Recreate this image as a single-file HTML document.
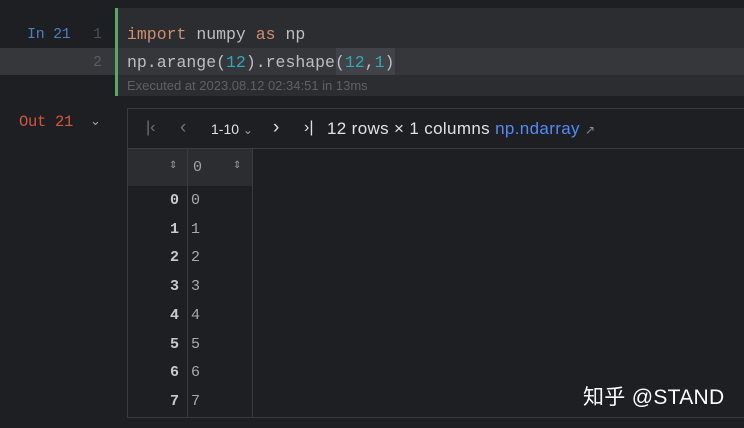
<!DOCTYPE html>
<html><head><meta charset="utf-8"><style>
body{margin:0;width:744px;height:428px;background:#1e1f22;overflow:hidden;position:relative;font-family:"Liberation Sans",sans-serif}
.a{position:absolute;white-space:nowrap}
.mono{font-family:"Liberation Mono","DejaVu Sans Mono",monospace;font-size:16.5px}
</style></head><body>
<div class="a" style="left:115px;top:8px;width:629px;height:88px;background:#2b2d30"></div>
<div class="a" style="left:0;top:48px;width:744px;height:27px;background:#35373b"></div>
<div class="a" style="left:336px;top:48px;width:59px;height:27px;background:#414349"></div>
<div class="a" style="left:115px;top:8px;width:3px;height:88px;background:#59a869"></div>
<div class="a mono" style="left:27px;top:26px;color:#4a7fc0;font-size:15px;letter-spacing:-0.3px">In 21</div>
<div class="a mono" style="left:93px;top:26px;color:#4b4d52;font-size:15px">1</div>
<div class="a mono" style="left:93px;top:54px;color:#5a5c61;font-size:15px">2</div>
<div class="a mono" style="left:127px;top:25px;color:#bcbec4"><span style="color:#cf8e6d">import</span> numpy <span style="color:#cf8e6d">as</span> np</div>
<div class="a mono" style="left:127px;top:53px;color:#bcbec4">np.arange(<span style="color:#2aacb8">12</span>).reshape(<span style="color:#2aacb8">12</span>,<span style="color:#2aacb8">1</span>)</div>
<div class="a" style="left:127px;top:78px;font-size:13px;color:#5f6166">Executed at 2023.08.12 02:34:51 in 13ms</div>
<div class="a mono" style="left:19px;top:113px;color:#d0583c;font-size:15.5px;letter-spacing:-0.3px">Out 21</div>
<div class="a" style="left:90px;top:113px;color:#a0a2a8;font-size:13px">&#8964;</div>
<div class="a" style="left:127px;top:108px;width:617px;height:310px;border:1px solid #393b40;border-right:none;box-sizing:border-box"></div>
<div class="a" style="left:128px;top:148px;width:616px;height:1px;background:#393b40"></div>
<div class="a" style="left:146px;top:119px;font-size:16px;color:#6f7177">|&lsaquo;</div>
<div class="a" style="left:180px;top:117px;font-size:19px;color:#6f7177">&lsaquo;</div>
<div class="a" style="left:211px;top:121px;font-size:14px;color:#dfe1e5">1-10 <span style="color:#a0a2a8;font-size:12px">&#8964;</span></div>
<div class="a" style="left:273px;top:117px;font-size:19px;color:#dfe1e5">&rsaquo;</div>
<div class="a" style="left:304px;top:119px;font-size:16px;color:#dfe1e5">&rsaquo;|</div>
<div class="a" style="left:327px;top:119px;font-size:17px;letter-spacing:0.35px;color:#dfe1e5">12 rows × 1 columns <span style="color:#548af7">np.ndarray</span> <span style="color:#8a8c92;font-size:12px">&#8599;</span></div>
<div class="a" style="left:128px;top:149px;width:124px;height:37px;background:#2b2d30"></div>
<div class="a" style="left:187px;top:149px;width:1px;height:268px;background:#393b40"></div>
<div class="a" style="left:252px;top:149px;width:1px;height:268px;background:#393b40"></div>
<div class="a" style="left:169px;top:160px;font-size:10px;color:#9a9ca2">&#8661;</div>
<div class="a" style="left:233px;top:160px;font-size:10px;color:#9a9ca2">&#8661;</div>
<div class="a mono" style="left:193px;top:159px;color:#a0a2a8;font-size:15px">0</div>
<div class="a mono" style="left:170px;top:187px;line-height:28.7px;color:#c8cad0;font-weight:bold;font-size:15px;text-align:right">0<br>1<br>2<br>3<br>4<br>5<br>6<br>7</div>
<div class="a mono" style="left:191px;top:187px;line-height:28.7px;color:#a8aab0;font-size:15px">0<br>1<br>2<br>3<br>4<br>5<br>6<br>7</div>
<div class="a" style="left:583px;top:381px;font-size:21px;letter-spacing:0.3px;color:#fff;font-family:'Liberation Sans','Noto Sans CJK SC',sans-serif">知乎 @STAND</div>
</body></html>
